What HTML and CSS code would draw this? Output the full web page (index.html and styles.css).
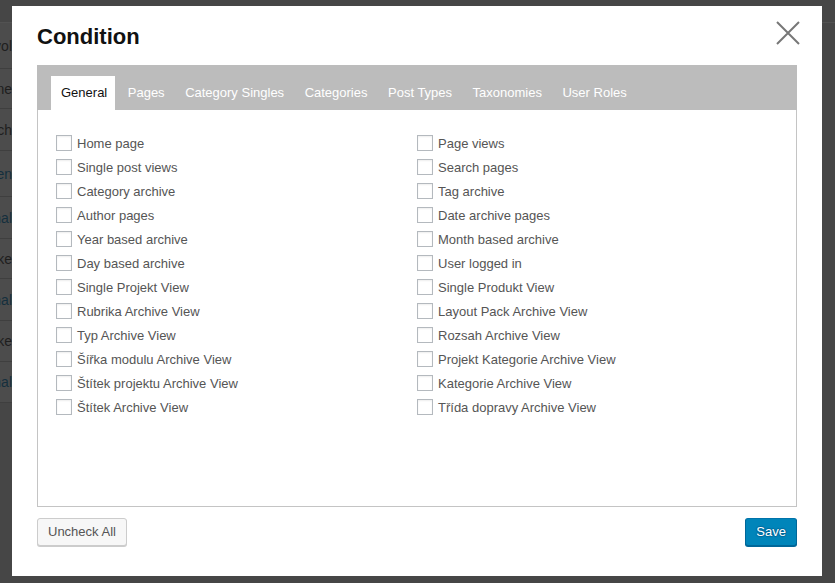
FILE: index.html
```html
<!DOCTYPE html>
<html lang="cs">
<head>
  <meta charset="UTF-8">
  <title>Condition</title>
  <link rel="stylesheet" href="styles.css">
</head>
<body>
<!-- Page behind the dialog -->
<div class="page">
  <div class="page-header"></div>
  <div class="page-rows">
    <div class="page-row r1"><span class="cut">Revol</span></div>
    <div class="page-row r2"><span class="cut">Domene</span></div>
    <div class="page-row r3"><span class="cut">Vyhledávach</span></div>
    <div class="page-row r4"><span class="cut link">Obsaženen</span></div>
    <div class="page-row r5"><span class="cut link">Personal</span></div>
    <div class="page-row r6"><span class="cut">Stránke</span></div>
    <div class="page-row r7"><span class="cut link">Personal</span></div>
    <div class="page-row r8"><span class="cut">Stránke</span></div>
    <div class="page-row r9"><span class="cut link">Personal</span></div>
  </div>
</div>

<!-- Condition dialog -->
<div class="modal">
  <h1 class="modal-title">Condition</h1>
  <button class="modal-close" type="button" aria-label="Close">
    <svg width="24" height="24" viewBox="0 0 24 24">
      <path d="M1 1 L23 23 M23 1 L1 23" stroke="#777" stroke-width="2" fill="none"/>
    </svg>
  </button>

  <div class="panel">
    <ul class="tabs">
      <li class="tab active">General</li>
      <li class="tab">Pages</li>
      <li class="tab">Category Singles</li>
      <li class="tab">Categories</li>
      <li class="tab">Post Types</li>
      <li class="tab">Taxonomies</li>
      <li class="tab">User Roles</li>
    </ul>

    <div class="options">
      <ul class="option-list">
        <li><label><input type="checkbox"> Home page</label></li>
        <li><label><input type="checkbox"> Single post views</label></li>
        <li><label><input type="checkbox"> Category archive</label></li>
        <li><label><input type="checkbox"> Author pages</label></li>
        <li><label><input type="checkbox"> Year based archive</label></li>
        <li><label><input type="checkbox"> Day based archive</label></li>
        <li><label><input type="checkbox"> Single Projekt View</label></li>
        <li><label><input type="checkbox"> Rubrika Archive View</label></li>
        <li><label><input type="checkbox"> Typ Archive View</label></li>
        <li><label><input type="checkbox"> Šířka modulu Archive View</label></li>
        <li><label><input type="checkbox"> Štítek projektu Archive View</label></li>
        <li><label><input type="checkbox"> Štítek Archive View</label></li>
      </ul>
      <ul class="option-list">
        <li><label><input type="checkbox"> Page views</label></li>
        <li><label><input type="checkbox"> Search pages</label></li>
        <li><label><input type="checkbox"> Tag archive</label></li>
        <li><label><input type="checkbox"> Date archive pages</label></li>
        <li><label><input type="checkbox"> Month based archive</label></li>
        <li><label><input type="checkbox"> User logged in</label></li>
        <li><label><input type="checkbox"> Single Produkt View</label></li>
        <li><label><input type="checkbox"> Layout Pack Archive View</label></li>
        <li><label><input type="checkbox"> Rozsah Archive View</label></li>
        <li><label><input type="checkbox"> Projekt Kategorie Archive View</label></li>
        <li><label><input type="checkbox"> Kategorie Archive View</label></li>
        <li><label><input type="checkbox"> Třída dopravy Archive View</label></li>
      </ul>
    </div>
  </div>

  <div class="modal-footer">
    <button class="btn" type="button">Uncheck All</button>
    <button class="btn btn-primary" type="button">Save</button>
  </div>
</div>
</body>
</html>
```

FILE: styles.css
```css
/* Page + dialog styling */
body {
  margin: 0;
  height: 583px;
  overflow: hidden;
  background: #464646;
  font-family: "Liberation Sans", Arial, sans-serif;
}

/* darkened page behind the dialog */
.page-header {
  height: 22px;
  border-bottom: 1px solid #525252;
}
.page-rows {
  width: 300px;
  background: #4c4c4c;
}
.page-row {
  display: flex;
  align-items: center;
  border-bottom: 1px solid #3f3f3f;
  font-size: 14px;
  color: #1e1e1e;
}
.page-row .cut {
  display: flex;
  justify-content: flex-end;
  width: 12px;
  overflow: hidden;
  white-space: nowrap;
}
.page-row .link {
  color: #142f3d;
}
.r1 { height: 45px; }
.r2 { height: 39px; }
.r3 { height: 41px; }
.r4 { height: 45px; }
.r5 { height: 41px; }
.r6 { height: 39px; }
.r7 { height: 41px; }
.r8 { height: 40px; }
.r9 { height: 40px; }

/* dialog */
.modal {
  position: absolute;
  left: 12px;
  top: 6px;
  width: 810px;
  height: 570px;
  box-sizing: border-box;
  padding: 18px 25px 0;
  background: #fff;
}
.modal-title {
  margin: 0 0 16px;
  font-size: 22px;
  line-height: 25px;
  font-weight: bold;
  color: #111;
}
.modal-close {
  position: absolute;
  top: 15px;
  right: 22px;
  padding: 0;
  border: none;
  background: none;
  line-height: 0;
  cursor: pointer;
}

.panel {
  height: 442px;
  box-sizing: border-box;
  border: 1px solid #c4c4c4;
}
.tabs {
  display: flex;
  gap: 2.5px;
  margin: -1px -1px 0;
  padding: 11px 14px 0;
  list-style: none;
  background: #bcbcbc;
}
.tab {
  height: 34px;
  line-height: 34px;
  padding: 0 8px 0 10px;
  font-size: 13px;
  color: #fff;
  cursor: pointer;
}
.tab.active {
  background: #fff;
  color: #111;
}

.options {
  display: grid;
  grid-template-columns: 1fr 1fr;
  padding: 21px 18px 0;
}
.option-list {
  margin: 0;
  padding: 0;
  list-style: none;
}
.option-list li {
  height: 24px;
}
.option-list label {
  display: flex;
  align-items: center;
  height: 24px;
  font-size: 13px;
  color: #555;
}
.option-list input[type="checkbox"] {
  -webkit-appearance: none;
  appearance: none;
  width: 16px;
  height: 16px;
  margin: 0 5px 0 0;
  border: 1px solid #b4b9be;
  background: #fff;
  box-shadow: inset 0 1px 2px rgba(0, 0, 0, 0.07);
}

.modal-footer {
  display: flex;
  justify-content: space-between;
  margin-top: 11px;
}
.btn {
  height: 28px;
  padding: 0 10px 1px;
  border: 1px solid #ccc;
  border-radius: 3px;
  background: #f7f7f7;
  box-shadow: 0 1px 0 #ccc;
  font-family: inherit;
  font-size: 13px;
  line-height: 26px;
  color: #555;
  cursor: pointer;
}
.btn-primary {
  background: #0085ba;
  border-color: #0073aa #006799 #006799;
  box-shadow: 0 1px 0 #006799;
  color: #fff;
  text-shadow: 0 -1px 1px #006799, 1px 0 1px #006799, 0 1px 1px #006799, -1px 0 1px #006799;
}
```
